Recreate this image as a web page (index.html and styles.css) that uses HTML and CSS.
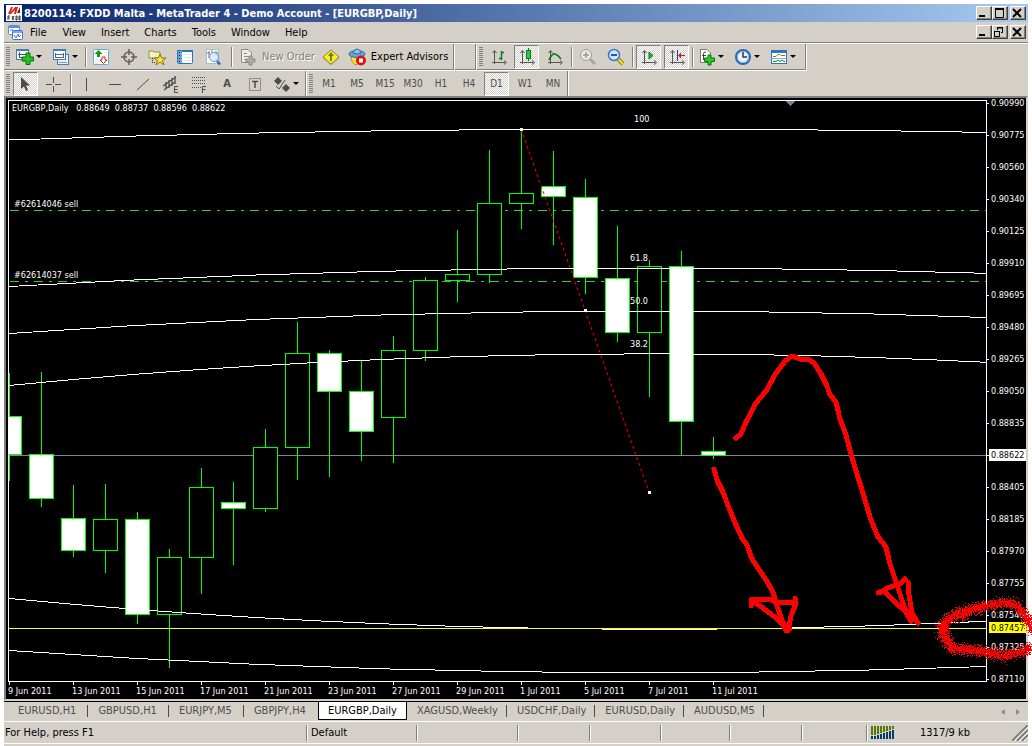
FILE: index.html
```html
<!DOCTYPE html>
<html lang="en">
<head>
<meta charset="utf-8">
<title>MetaTrader 4 - [EURGBP,Daily]</title>
<link rel="stylesheet" href="styles.css">
</head>
<body>
<div class="window">
  <header class="titlebar">
    <svg class="app-icon" width="16" height="16" viewBox="0 0 16 16"><rect width="16" height="16" fill="#fff"/><path d="M2 9 5 2 7 2 5 7 9 2 12 2 10 9 8 9 9 5 5 9z" fill="#d8241a"/><path d="M11 8 14 2V8z" fill="#7a1a10"/><path d="M2 15V11H4M2 13H4M6 11 8 15M8 11 6 15M10 11V15H11V11zM13 11V15H14V11z" stroke="#333" fill="none"/></svg>
    <h1 class="title">8200114: FXDD Malta - MetaTrader 4 - Demo Account - [EURGBP,Daily]</h1>
    <div class="win-buttons">
      <button class="win-btn" aria-label="Minimize"><svg width="12" height="10"><path d="M2 8H8" stroke="#000" stroke-width="2"/></svg></button>
      <button class="win-btn" aria-label="Maximize"><svg width="12" height="10"><path d="M2.500 1V9.500H10.500V1M2 1H11" stroke="#000" fill="none"/><path d="M2 1H11" stroke="#000" stroke-width="2"/></svg></button>
      <button class="win-btn last" aria-label="Close"><svg width="12" height="10"><path d="M2 1 10 9M10 1 2 9" stroke="#000" stroke-width="2"/></svg></button>
    </div>
  </header>
  <nav class="menubar">
    <svg class="doc-icon" width="16" height="16" viewBox="0 0 16 16"><rect x=".5" y="1.500" width="11" height="9" rx="1" fill="#fff" stroke="#5b8fdc"/><path d="M1 3H11" stroke="#5b8fdc" stroke-width="2"/><path d="M2 7 4 5 5 8" stroke="#5b8fdc" fill="none"/><rect x="4.500" y="6.500" width="10" height="9" rx="1" fill="#fff" stroke="#3f73d0"/><path d="M5 8H14" stroke="#7aa6ea" stroke-width="2"/><path d="M6 11 8 14 10 10 11 13 13 11" stroke="#3f73d0" fill="none"/></svg>
    <button class="menu">File</button><button class="menu">View</button><button class="menu">Insert</button><button class="menu">Charts</button><button class="menu">Tools</button><button class="menu">Window</button><button class="menu">Help</button>
    <div class="win-buttons">
      <button class="win-btn" aria-label="Minimize chart"><svg width="12" height="10"><path d="M2 8H8" stroke="#000" stroke-width="2"/></svg></button>
      <button class="win-btn" aria-label="Restore chart"><svg width="12" height="10"><path d="M4.500 3V.5H9.500V5.500H8M1.500 4.500H6.500V9.500H1.500zM4 1H10M1 4.500H7" stroke="#000" fill="none"/></svg></button>
      <button class="win-btn last" aria-label="Close chart"><svg width="12" height="10"><path d="M2 1 10 9M10 1 2 9" stroke="#000" stroke-width="2"/></svg></button>
    </div>
  </nav>
  <div class="toolrow">
    <div class="toolbar">
      <i class="grip"></i>
      <button class="tool drop" aria-label="New chart"><svg width="18" height="18" viewBox="0 0 18 18"><rect x=".5" y="1.500" width="12" height="10" fill="#fff" stroke="#3d7fb8"/><path d="M1 2H13" stroke="#3d7fb8" stroke-width="2"/><path d="M3.500 4V9M2 6.500H10M3 9.500H6" stroke="#456" fill="none"/><path d="M10 5H14V9H17.500V13H14V16.500H10V13H6V9H10z" fill="#21c321" stroke="#0a700a"/></svg><b class="caret"></b></button>
      <button class="tool drop" aria-label="Profiles"><svg width="18" height="18" viewBox="0 0 18 18"><rect x="5.500" y="6.500" width="11" height="10" fill="#e7f1fa" stroke="#3d7fb8"/><path d="M7 14.500H15" stroke="#89a"/><rect x="1.500" y="1.500" width="12" height="10" fill="#fff" stroke="#3d7fb8"/><path d="M2 2H13" stroke="#3d7fb8" stroke-width="2"/><path d="M3.500 5V10M11.500 5V10M3 6.500H12M3 9.500H12" stroke="#567"/></svg><b class="caret"></b></button>
      <i class="sep tight"></i>
      <button class="tool" aria-label="Market Watch"><svg width="18" height="18" viewBox="0 0 18 18"><rect x="1.500" y="1.500" width="15" height="15" rx="1" fill="#fff" stroke="#6aa7dc"/><path d="M12 5H15M12 8H15M3 12H6M3 15H6" stroke="#cde"/><path d="M6.500 2 10.500 6H8V9H5V6H2.500z" fill="#159a15"/><path d="M11.500 15.500 8 12H10V9H13V12H15z" fill="#fff" stroke="#d22"/></svg></button>
      <button class="tool" aria-label="Data Window"><svg width="18" height="18" viewBox="0 0 18 18" fill="none" stroke="#5f5f58"><circle cx="9" cy="9" r="5" stroke-width="1.500"/><path d="M9 1V7M9 11V17M1 9H7M11 9H17" stroke-width="1.500"/></svg></button>
      <button class="tool" aria-label="Navigator"><svg width="18" height="18" viewBox="0 0 18 18"><path d="M1 3H5L6 4H12V10H1z" fill="#f7f3b0" stroke="#8b8b60"/><path d="M4.500 10V14M4 14.500H8" stroke="#333" stroke-dasharray="1 1"/><path d="M12 6 13.500 10H18L14.500 12.500 16 17 12 14 8 17 9.500 12.500 6 10H10.500z" fill="#ffe936" stroke="#857913"/></svg></button>
      <button class="tool" aria-label="Terminal"><svg width="18" height="18" viewBox="0 0 18 18"><rect x="1.500" y="2.500" width="15" height="13" rx="1" fill="#fff" stroke="#2875bd"/><path d="M1 3H17" stroke="#2875bd" stroke-width="2"/><path d="M4 3V15" stroke="#6aa7dc" stroke-width="4"/><path d="M3.500 4V15" stroke="#111" stroke-dasharray="1 2"/><path d="M8 6.500H15M8 9.500H15M8 12.500H15" stroke="#d4e5f4"/></svg></button>
      <button class="tool" aria-label="Strategy Tester"><svg width="18" height="18" viewBox="0 0 18 18"><rect x="2.500" y="1.500" width="12" height="14" fill="#fff" stroke="#a9bccb"/><path d="M5 3V10M8 2V6M12 3V8M3 5H6M11 5H14" stroke="#777"/><circle cx="10" cy="9" r="4.500" fill="#d5e9fb" fill-opacity=".8" stroke="#5f9bd0"/><path d="M13 13 16 16.500" stroke="#3567b4" stroke-width="2.500"/></svg></button>
      <i class="sep"></i>
      <button class="tool label disabled" disabled><svg width="18" height="18" viewBox="0 0 18 18"><path d="M2.500 1.500H9L12.500 5V14.500H2.500z" fill="#efede7" stroke="#8b8982"/><path d="M5 5.500H8M5 8.500H10M5 11.500H8" stroke="#8b8982"/><path d="M10 8H13V11H16V14H13V17H10V14H7V11H10z" fill="#b1aea6" stroke="#8b8982"/></svg>New Order</button>
      <button class="tool" aria-label="MetaEditor"><svg width="18" height="18" viewBox="0 0 18 18"><path d="M1 9 9 2 17 9 9 16z" fill="#ffed29" stroke="#99831b"/><path d="M1 10 9 17 17 10" fill="none" stroke="#aaa183"/><path d="M9 5V13" stroke="#5d8b1e" stroke-width="2"/><path d="M6 8 9 4 12 8z" fill="#5d8b1e"/></svg></button>
      <button class="tool label"><svg width="18" height="18" viewBox="0 0 18 18"><path d="M3 8Q3 15 8 17L15 12V8z" fill="#ffdf32" stroke="#b88b1c"/><ellipse cx="9" cy="6" rx="8" ry="3.500" fill="#6aa4d5" stroke="#376b9e"/><path d="M5 5Q6 1 9 1T13 5Q9 7 5 5" fill="#8fc1e8" stroke="#376b9e"/><circle cx="13" cy="12.500" r="5" fill="#e01010"/><rect x="11" y="10.500" width="4" height="4" fill="#fff"/></svg>Expert Advisors</button>
    </div>
    <div class="toolbar blank"></div>
    <div class="toolbar">
      <i class="grip"></i>
      <button class="tool" aria-label="Bar chart"><svg width="18" height="18" viewBox="0 0 18 18" fill="none" stroke="#555"><path d="M4.500 16V3M2.500 5 4.500 2.500 6.500 5M2 14.500H15M14 12.500 16.500 14.500 14 16.500"/><path d="M11.500 3V12M9 10.500H12M11 4.500H14" stroke="#087d18" stroke-width="1.500"/></svg></button>
      <button class="tool pressed" aria-label="Candlesticks"><svg width="18" height="18" viewBox="0 0 18 18" fill="none" stroke="#555"><path d="M4.500 16V3M2.500 5 4.500 2.500 6.500 5M2 14.500H15M14 12.500 16.500 14.500 14 16.500"/><path d="M10.500 0V13" stroke="#087d18"/><rect x="8.500" y="2.500" width="4" height="8" fill="#28ce3d" stroke="#087d18"/></svg></button>
      <button class="tool" aria-label="Line chart"><svg width="18" height="18" viewBox="0 0 18 18" fill="none" stroke="#555"><path d="M4.500 16V3M2.500 5 4.500 2.500 6.500 5M2 14.500H15M14 12.500 16.500 14.500 14 16.500"/><path d="M3 12Q6 5 9 6T15 11" stroke="#087d18" stroke-width="1.500"/></svg></button>
      <i class="sep mid"></i>
      <button class="tool" aria-label="Zoom in"><svg width="18" height="18" viewBox="0 0 18 18" fill="none"><path d="M11 11 16 16" stroke="#aaa79f" stroke-width="3"/><circle cx="7" cy="7" r="5.500" fill="#eceae5" stroke="#9c9a94"/><path d="M4 7H10M7 4V10" stroke="#9c9a94" stroke-width="1.500"/></svg></button>
      <button class="tool" aria-label="Zoom out"><svg width="18" height="18" viewBox="0 0 18 18" fill="none"><path d="M11 11 16 16" stroke="#8f850f" stroke-width="4"/><path d="M11 11 16 16" stroke="#f5e51e" stroke-width="2"/><circle cx="7" cy="7" r="5.500" fill="#cfe5fa" stroke="#3b78cb" stroke-width="1.500"/><path d="M4 7H10" stroke="#2457a8" stroke-width="2"/></svg></button>
      <i class="sep mid"></i>
      <button class="tool pressed" aria-label="Auto scroll"><svg width="18" height="18" viewBox="0 0 18 18" fill="none" stroke="#555"><path d="M4.500 16V3M2.500 5 4.500 2.500 6.500 5M2 14.500H15M14 12.500 16.500 14.500 14 16.500"/><path d="M9 4V11L13 7.500z" fill="#28b83a" stroke="#087d18"/></svg></button>
      <button class="tool pressed" aria-label="Chart shift"><svg width="18" height="18" viewBox="0 0 18 18" fill="none" stroke="#555"><path d="M4.500 16V3M2.500 5 4.500 2.500 6.500 5M2 14.500H15M14 12.500 16.500 14.500 14 16.500"/><path d="M9.500 2V13" stroke="#1c3fa8"/><path d="M10 7.500 13 4.500V7H17V8H13V10.500z" fill="#c82018" stroke="none"/></svg></button>
      <i class="sep tight"></i>
      <button class="tool drop" aria-label="Indicators"><svg width="18" height="18" viewBox="0 0 18 18"><path d="M2.500 1.500H9L12.500 5V14.500H2.500z" fill="#fff" stroke="#777"/><path d="M8 4Q6 3 5.500 6V12M4 7.500H8" stroke="#444" fill="none"/><path d="M10 7H13V10H16.500V13.500H13V17H10V13.500H6.500V10H10z" fill="#21d321" stroke="#0a700a"/></svg><b class="caret"></b></button>
      <button class="tool drop" aria-label="Periods"><svg width="18" height="18" viewBox="0 0 18 18"><circle cx="9" cy="9" r="7" fill="#edf5fc" stroke="#2767b9" stroke-width="2"/><circle cx="9" cy="9" r="5.500" fill="none" stroke="#7fb2e6"/><path d="M9 4V9H13" stroke="#333" fill="none" stroke-width="1.500"/></svg><b class="caret"></b></button>
      <button class="tool drop" aria-label="Templates"><svg width="18" height="18" viewBox="0 0 18 18"><rect x="1.500" y="2.500" width="15" height="13" fill="#fff" stroke="#2f75bd"/><path d="M1 3.500H17" stroke="#2f75bd" stroke-width="3"/><path d="M3 8.500H6L8 6.500H10L11 7.500H15" stroke="#7b7a19" fill="none"/><path d="M2 10.500H16" stroke="#8ab4da"/><path d="M3 13.500H6L8 12 10 13.500 12 12 14 13.500H15" stroke="#168a27" fill="none"/></svg><b class="caret"></b></button>
    </div>
  </div>
  <div class="toolrow lower">
    <div class="toolbar">
      <i class="grip"></i>
      <button class="tool pressed" aria-label="Cursor"><svg width="18" height="18" viewBox="0 0 18 18"><path d="M4 2V14L7 11.500 9 16 11 15 9 10.500H13z" fill="#4c4c4c"/></svg></button>
      <button class="tool" aria-label="Crosshair"><svg width="18" height="18" viewBox="0 0 18 18"><path d="M8.500 2V8M8.500 11V17M1 9.500H7M10 9.500H16" stroke="#4c4c4c"/></svg></button>
      <i class="sep mid"></i>
      <button class="tool" aria-label="Vertical line"><svg width="18" height="18" viewBox="0 0 18 18"><path d="M8.500 3V16" stroke="#4c4c4c"/></svg></button>
      <button class="tool" aria-label="Horizontal line"><svg width="18" height="18" viewBox="0 0 18 18"><path d="M3 9.500H15" stroke="#4c4c4c"/></svg></button>
      <button class="tool" aria-label="Trendline"><svg width="18" height="18" viewBox="0 0 18 18"><path d="M3 15 15 4" stroke="#4c4c4c"/></svg></button>
      <button class="tool" aria-label="Equidistant channel"><svg width="18" height="18" viewBox="0 0 18 18"><path d="M1 11 14 2M2 15 13 7M4 7V14M7 5V13M10 3V11M13 1V9" stroke="#4c4c4c" stroke-width="1.300" fill="none"/><path d="M16 11.500H12.500V17.500H16M12.500 14.500H15.500" stroke="#4c4c4c" fill="none"/></svg></button>
      <button class="tool" aria-label="Fibonacci"><svg width="18" height="18" viewBox="0 0 18 18"><path d="M2 2.500H16M2 5.500H16M2 8.500H16M2 12.500H11" stroke="#4c4c4c" stroke-dasharray="1 1"/><path d="M16 11.500H12.500V18M12.500 14.500H15.500" stroke="#4c4c4c" fill="none"/></svg></button>
      <button class="tool glyph-btn">A</button>
      <button class="tool" aria-label="Text label"><svg width="18" height="18" viewBox="0 0 18 18"><rect x="3.500" y="3.500" width="11" height="12" fill="none" stroke="#4c4c4c" stroke-dasharray="1 1"/><path d="M6 6.500H12M9 6V13" stroke="#4c4c4c" stroke-width="1.500"/></svg></button>
      <button class="tool drop" aria-label="Arrows"><svg width="18" height="18" viewBox="0 0 18 18"><path d="M5 2 9 6 5 10 1 6zM13 9 17 13 13 17 9 13z" fill="#4c4c4c"/><path d="M3 11 6 14 12 5" stroke="#4c4c4c" fill="none"/></svg><b class="caret"></b></button>
    </div>
    <div class="toolbar periods">
      <i class="grip"></i>
      <button class="tool">M1</button><button class="tool">M5</button><button class="tool">M15</button><button class="tool">M30</button><button class="tool">H1</button><button class="tool">H4</button><button class="tool pressed">D1</button><button class="tool">W1</button><button class="tool">MN</button>
    </div>
  </div>
  <main class="chart">
    <svg class="plot" viewBox="6 98 1020 601" role="img" aria-label="EURGBP daily candlestick chart">
      <defs>
        <filter id="spray" x="-10%" y="-20%" width="120%" height="140%">
          <feTurbulence type="fractalNoise" baseFrequency="0.9" numOctaves="2" seed="4" result="n"/>
          <feDisplacementMap in="SourceGraphic" in2="n" scale="18" xChannelSelector="R" yChannelSelector="G"/>
          <feComponentTransfer><feFuncA type="discrete" tableValues="0 1"/></feComponentTransfer>
        </filter>
      </defs>
      <g class="crisp">
        <path class="bid" d="M9 455.500H986"/>
        <path class="order" d="M10 210.500H986M10 281.500H986"/>
        <path class="wick" d="M9.500 373V481M41.500 372V507M73.500 485V557M105.500 484V573M137.500 512V624M169.500 549V668M201.500 468V594M233.500 482V565M265.500 429V512M297.500 322V480M329.500 350V477M361.500 361V461M393.500 336V463M425.500 277V361M457.500 230V302M489.500 150V283M521.500 130V229M553.500 151V245M585.500 179V294M617.500 226V342M649.500 260V397M681.500 251V456M713.500 437V459"/>
        <path class="body up" d="M93.500 519.500h24v31h-24zM157.500 557.500h24v57h-24zM189.500 487.500h24v70h-24zM253.500 447.500h24v61h-24zM285.500 353.500h24v94h-24zM381.500 350.500h24v67h-24zM413.500 280.500h24v70h-24zM445.500 274.500h24v6h-24zM477.500 203.500h24v71h-24zM509.500 193.500h24v10h-24zM637.500 266.500h24v66h-24z"/>
        <path class="body down" d="M8.500 416.500h13v38h-13zM29.500 454.500h24v44h-24zM61.500 518.500h24v32h-24zM125.500 519.500h24v95h-24zM221.500 502.500h24v6h-24zM317.500 353.500h24v38h-24zM349.500 391.500h24v40h-24zM541.500 186.500h24v10h-24zM573.500 197.500h24v80h-24zM605.500 278.500h24v54h-24zM669.500 266.500h24v155h-24zM701.500 451.500h24v4h-24z"/>
        <path class="arc" d="M9 140Q497.500 122.900 986 132.400M9 286.500Q497.500 258.300 986 273.300M9 333.500Q497.500 299.200 986 317.500M9 385.500Q497.500 337.500 986 362.300M9 598.500Q497.500 645 986 621.300M9 650.500Q497.500 684.400 986 666.500"/>
        <path class="level" d="M9 628.500H986"/>
        <path class="trend" d="M521 129 585 310 649 492"/>
        <path class="handle" d="M520 128h3v3h-3zM584 309h3v3h-3zM648 491h3v3h-3z"/>
        <path class="frame" d="M8.500 100.500H986.500V681.500H8.500z"/>
        <path class="frame" d="M987 103.500h2M987 135.500h2M987 167.500h2M987 199.500h2M987 231.500h2M987 263.500h2M987 295.500h2M987 327.500h2M987 359.500h2M987 391.500h2M987 423.500h2M987 455.500h2M987 487.500h2M987 519.500h2M987 551.500h2M987 583.500h2M987 615.500h2M987 647.500h2M987 679.500h2M9.500 682v3M73.500 682v3M137.500 682v3M201.500 682v3M265.500 682v3M329.500 682v3M393.500 682v3M457.500 682v3M521.500 682v3M585.500 682v3M649.500 682v3M713.500 682v3"/>
        <path d="M785 101H795L790 106z" fill="#708090"/>
      </g>
      <g class="txt">
        <text x="12" y="111">EURGBP,Daily&#160;&#160; 0.88649&#160; 0.88737&#160; 0.88596&#160; 0.88622</text>
        <text x="14" y="207">#62614046 sell</text><text x="14" y="278">#62614037 sell</text>
        <text x="634" y="122">100</text><text x="630" y="261">61.8</text><text x="630" y="304">50.0</text><text x="630" y="347">38.2</text>
      </g>
      <g class="txt">
        <text x="991" y="106">0.90990</text><text x="991" y="138">0.90775</text><text x="991" y="170">0.90560</text><text x="991" y="202">0.90340</text><text x="991" y="234">0.90125</text><text x="991" y="266">0.89910</text><text x="991" y="298">0.89695</text><text x="991" y="330">0.89480</text><text x="991" y="362">0.89265</text><text x="991" y="394">0.89050</text><text x="991" y="426">0.88835</text><text x="991" y="490">0.88405</text><text x="991" y="522">0.88185</text><text x="991" y="554">0.87970</text><text x="991" y="586">0.87755</text><text x="991" y="618">0.87540</text><text x="991" y="650">0.87325</text><text x="991" y="682">0.87110</text>
        <rect x="989" y="449" width="37" height="12" fill="#fff"/><text class="dark" x="991" y="458">0.88622</text>
        <rect x="989" y="622" width="37" height="11" fill="#ff0"/><text class="dark" x="991" y="631">0.87457</text>
      </g>
      <g class="txt">
        <text x="8" y="694">9 Jun 2011</text><text x="72" y="694">13 Jun 2011</text><text x="136" y="694">15 Jun 2011</text><text x="200" y="694">17 Jun 2011</text><text x="264" y="694">21 Jun 2011</text><text x="328" y="694">23 Jun 2011</text><text x="392" y="694">27 Jun 2011</text><text x="456" y="694">29 Jun 2011</text><text x="520" y="694">1 Jul 2011</text><text x="584" y="694">5 Jul 2011</text><text x="648" y="694">7 Jul 2011</text><text x="712" y="694">11 Jul 2011</text>
      </g>
      <g class="pen">
        <path d="M736 438 741 434 746 422 756 403 766 391 776 373 785 361 792 356 800 359 808 359 814 363 821 374 827 386 830 395 836 402 840 419 846 435 851 454 857 474 862 490 870 517 878 537 886 547 890 564 897 585 905 609 911 620M918 623 912 613 909 595 908 582M905 579 900 584 887 588 884 591 895 602 905 611 911 621M878 593 886 591"/>
        <path d="M714 469 717 480 723 492 729 508 736 525 742 538 747 545 752 559 760 571 766 580 773 592 777 606 782 620 786 631M752 599 770 599 776 602 795 602 795 598M796 603 791 616 788 631M751 606 751 600 763 608 775 617 784 626"/>
        <path d="M785 629H790M879 592 885 590M784 625H788"/>
      </g>
      <g class="spray" filter="url(#spray)">
        <path d="M942 628Q947 616 967 611L985 606 1001 603 1015 604 1023 612 1030 624 1034 632"/>
        <path d="M941 622 943 636 951 648 966 650 984 652 1002 655 1018 653 1032 648"/>
        <path d="M943 622 946 638 953 648 968 650M960 616 968 615M998 655H1010"/>
      </g>
    </svg>
  </main>
  <nav class="tabs">
    <a class="tab" href="#">EURUSD,H1</a><a class="tab" href="#">GBPUSD,H1</a><a class="tab" href="#">EURJPY,M5</a><a class="tab nosep" href="#">GBPJPY,H4</a><a class="tab active" href="#">EURGBP,Daily</a><a class="tab" href="#">XAGUSD,Weekly</a><a class="tab" href="#">USDCHF,Daily</a><a class="tab" href="#">EURUSD,Daily</a><a class="tab" href="#">AUDUSD,M5</a>
    <div class="scrollers"><button aria-label="Scroll left"><svg width="5" height="8"><path d="M5 1V7L1 4z" fill="#8a8a8a"/></svg></button><button aria-label="Scroll right"><svg width="5" height="8"><path d="M0 1V7L4 4z" fill="#8a8a8a"/></svg></button></div>
  </nav>
  <footer class="status">
    <span class="cell help">For Help, press F1</span><span class="cell w110">Default</span><span class="cell w101"></span><span class="cell w72"></span><span class="cell w71"></span><span class="cell w69"></span><span class="cell w72"></span><span class="cell w65"></span>
    <span class="cell net"><svg class="crisp" width="24" height="13" viewBox="0 0 24 13"><path d="M1 0V9M4 0V9M7 0V8M10 0V7M13 0V6M16 0V5M19 0V4M22 0V3" stroke="#5c7605" stroke-width="2"/><path d="M1 10V13M4 10V13M7 9V13M10 8V13M13 7V13M16 6V13M19 5V13M22 4V13" stroke="#043f65" stroke-width="2"/></svg><span>1317/9 kb</span><svg class="resize" width="16" height="16"><path d="M0 16 16 0M5 16 16 5M10 16 16 10" stroke="#808080" stroke-width="2"/><path d="M2 16 16 2M7 16 16 7M12 16 16 12" stroke="#fff"/></svg></span>
  </footer>
</div>
</body>
</html>
```

FILE: styles.css
```css
* { box-sizing: border-box; }
body {
  margin: 0;
  padding: 4px 4px 0;
  background: #fff;
  font-family: "DejaVu Sans Condensed", "DejaVu Sans", sans-serif;
  font-size: 11px;
  color: #000;
}
button { font: inherit; color: inherit; background: none; border: 0; padding: 0; margin: 0; }
svg { display: block; flex: none; }
.window { background: #d4d0c8; padding-bottom: 2px; }
.titlebar {
  display: flex; align-items: center; height: 18px; padding: 0 2px;
  background: linear-gradient(90deg, #0a246a, #a6caf0);
}
.title { margin: 0 0 0 2px; font-size: 11px; font-weight: bold; color: #fff; white-space: nowrap; flex: 1; }
.menubar { display: flex; align-items: center; height: 20px; padding: 0 2px 0 4px; }
.doc-icon { margin-right: 2px; }
.menu { padding: 0 7px 0 8px; height: 18px; }
.menu:first-of-type { padding-left: 4px; padding-right: 8px; }
.win-buttons { display: flex; margin-left: auto; }
.win-btn {
  width: 16px; height: 14px; background: #d4d0c8;
  border: 1px solid; border-color: #fff #404040 #404040 #fff;
  box-shadow: inset -1px -1px #808080;
}
.win-btn.last { margin-left: 2px; }
.toolrow { display: flex; height: 28px; border-top: 1px solid #808080; box-shadow: inset 0 1px #fff; padding-top: 1px; }
.toolrow.lower { height: 26px; border-top: 0; box-shadow: none; padding: 1px 0 0; }
.toolbar {
  display: flex; align-items: center; padding-right: 3px;
  border-right: 1px solid #808080; border-bottom: 1px solid #808080;
  box-shadow: 1px 1px #fff;
}
.toolbar + .toolbar { margin-left: 1px; }
.lower .toolbar { padding-right: 0; border-bottom: 0; box-shadow: 1px 0 #fff; }
.blank { width: 21px; }
.grip {
  width: 4px; height: 20px; margin: 0 2px;
  background: repeating-linear-gradient(#808080 0 1px, #d4d0c8 1px 2px);
}
.sep { width: 1px; height: 20px; margin: 0 4px; background: #808080; box-shadow: 1px 0 #fff; }
.sep.tight { margin: 0 1px; }
.sep.mid { margin: 0 2px; }
.tool { display: flex; align-items: center; justify-content: center; width: 28px; height: 24px; }
.tool.drop { width: 36px; justify-content: flex-start; padding-left: 4px; gap: 2px; }
.tool.label { width: auto; gap: 5px; padding: 0 2px 0 3px; }
.disabled { color: #808080; text-shadow: 1px 1px #fff; }
.caret { border: 3px solid transparent; border-top-color: #000; border-bottom: 0; }
.pressed {
  border: 1px solid; border-color: #808080 #fff #fff #808080;
  width: 25px; margin: 0 2px 0 1px;
  background: repeating-conic-gradient(#fff 0 25%, #d4d0c8 0 50%) 0 0 / 2px 2px;
}
.glyph-btn { font-weight: bold; font-size: 11px; color: #4c4c4c; }
.periods .tool { font-size: 10px; color: #4c4c4c; }
.chart {
  background: #000;
  border: 2px solid; border-color: #808080 #d4d0c8 #d4d0c8 #808080;
  border-bottom-width: 1px;
}
.plot { width: 100%; height: auto; overflow: visible; position: relative; }
.crisp { shape-rendering: crispEdges; }
.plot path { stroke-width: 1; }
.bid { stroke: #778899; }
.order { stroke: #32cd32; stroke-dasharray: 9 6 3 6; }
.wick { stroke: #0f0; }
.body { stroke: #0f0; }
.up { fill: #000; }
.down { fill: #fff; }
.arc, .frame { fill: none; stroke: #fff; }
.level { stroke: #ff0; }
.plot .trend { fill: none; stroke: #f00; stroke-dasharray: 3 3; shape-rendering: auto; }
.handle { fill: #fff; }
.txt { fill: #fff; font-size: 9px; }
.txt .dark { fill: #000; }
.plot .pen path { fill: none; stroke: #f00; stroke-width: 5; stroke-linejoin: round; stroke-linecap: round; shape-rendering: crispEdges; }
.plot .spray path { fill: none; stroke: #f00; stroke-width: 8; stroke-linejoin: round; }
.tabs { display: flex; height: 20px; margin-top: 1px; border-top: 1px solid #000; color: #4c4c4c; }
.tab {
  color: inherit; text-decoration: none; line-height: 17px; padding: 0 12px 0 10px; white-space: nowrap;
  background: linear-gradient(#4c4c4c, #4c4c4c) right 3px / 1px 12px no-repeat;
}
.tab:first-child { padding-left: 14px; }
.tab.nosep { background: none; }
.tab.active { background: #fff; color: #000; border: 1px solid #000; border-top: 0; height: 18px; padding: 0 9px; }
.tab.active ~ .tab { padding-right: 9px; }
.scrollers { display: flex; gap: 11px; margin: 0 7px 0 auto; align-items: center; }
.status { display: flex; height: 23px; border-top: 1px solid #fff; border-bottom: 1px solid #fff; align-items: center; }
.cell { height: 16px; line-height: 16px; padding-left: 4px; border-left: 1px solid #808080; box-shadow: inset 1px 0 #fff; }
.cell.help { flex: 1; border: 0; box-shadow: none; padding-left: 1px; }
.w110 { width: 110px; } .w101 { width: 101px; } .w72 { width: 72px; } .w71 { width: 71px; } .w69 { width: 69px; } .w65 { width: 65px; }
.net { display: flex; align-items: center; width: 162px; }
.net span { flex: 1; margin-left: 25px; }
```
